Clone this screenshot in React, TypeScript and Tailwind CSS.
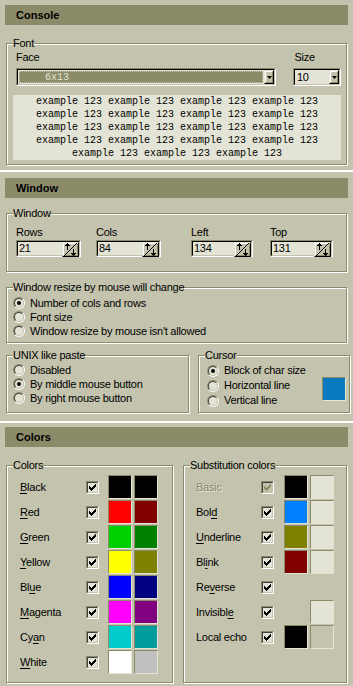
import type { ReactNode } from 'react';

// Windows-classic style preferences panel (Console / Window / Colors)

const sans = "[font-family:'Liberation_Sans',Arial,sans-serif]";
const mono = "[font-family:'Liberation_Mono','DejaVu_Sans_Mono',monospace]";

function Header({ title }: { title: string }) {
  return (
    <div className="mx-[5px] flex h-[20px] items-center bg-[#8b8b69] pl-[11px] text-[11px] font-bold tracking-normal text-black">
      {title}
    </div>
  );
}

function Group({ label, className, children }: { label: string; className?: string; children?: ReactNode }) {
  return (
    <div
      className={`border border-[#8b8b69] shadow-[1px_1px_0_#ffffff,inset_1px_1px_0_#ffffff] ${className ?? ''}`}
    >
      <div className="-mt-[7px] ml-[6px] w-fit bg-[#c4c4ae] leading-[13px]">{label}</div>
      {children}
    </div>
  );
}

function Sunken({ className, children }: { className?: string; children?: ReactNode }) {
  return (
    <div className={`border border-t-[#8b8b69] border-l-[#8b8b69] border-r-white border-b-white ${className ?? ''}`}>
      <div className="flex h-full w-full border border-t-black border-l-black border-r-[#c4c4ae] border-b-[#c4c4ae] bg-[#e4e4d6]">
        {children}
      </div>
    </div>
  );
}

function Raised({ className, children }: { className?: string; children?: ReactNode }) {
  return (
    <div className={`border border-t-[#e4e4d6] border-l-[#e4e4d6] border-r-black border-b-black ${className ?? ''}`}>
      <div className="flex h-full w-full items-center justify-center border border-t-white border-l-white border-r-[#8b8b69] border-b-[#8b8b69] bg-[#c4c4ae]">
        {children}
      </div>
    </div>
  );
}

function DropArrow() {
  return (
    <svg width="5" height="3" viewBox="0 0 5 3">
      <path d="M0 0h5L2.5 3z" fill="#000" />
    </svg>
  );
}

function SpinIcon() {
  return (
    <svg width="13" height="13" viewBox="0 0 13 13" shapeRendering="crispEdges">
      <path d="M0 13L13 0" stroke="#000" strokeWidth="1" />
      <path d="M3 0h1v1h1v1h1v1H4v4H3V3H1V2h1V1h1z" fill="#000" />
      <path d="M9 6h1v4h2v1h-1v1h-1v1H9v-1H8v-1H7v-1h2z" fill="#000" />
    </svg>
  );
}

function NumField({ value, width }: { value: string; width: string }) {
  return (
    <Sunken className={`h-[17px] ${width}`}>
      <div className="flex-1 pl-[1px] text-[11px] leading-[13px]">{value}</div>
      <Raised className="h-[15px] w-[17px]">
        <SpinIcon />
      </Raised>
    </Sunken>
  );
}

function Radio({ checked }: { checked?: boolean }) {
  return (
    <span className="flex h-[12px] w-[12px] shrink-0 rounded-full border border-t-[#8b8b69] border-l-[#8b8b69] border-r-white border-b-white">
      <span className="flex h-full w-full items-center justify-center rounded-full border border-t-[#404040] border-l-[#404040] border-r-[#c4c4ae] border-b-[#c4c4ae] bg-[#e4e4d6]">
        {checked && <span className="h-[4px] w-[4px] rounded-full bg-black" />}
      </span>
    </span>
  );
}

function RadioRow({ label, checked, height = 'h-[14px]', gap = 'pl-[6px]' }: { label: string; checked?: boolean; height?: string; gap?: string }) {
  return (
    <div className={`flex items-center gap-[5px] ${height} ${gap}`}>
      <Radio checked={checked} />
      <span className="leading-[13px]">{label}</span>
    </div>
  );
}

const CHECK_OFFSETS = [2, 3, 4, 3, 2, 1, 0];

function Checkbox({ disabled }: { disabled?: boolean }) {
  const ink = disabled ? '#8b8b69' : '#000';
  return (
    <span className="flex h-[13px] w-[13px] shrink-0 border border-t-[#8b8b69] border-l-[#8b8b69] border-r-white border-b-white">
      <span
        className={`flex h-full w-full border border-t-[#404040] border-l-[#404040] border-r-[#c4c4ae] border-b-[#c4c4ae] ${
          disabled ? 'bg-[#c4c4ae]' : 'bg-[#e4e4d6]'
        }`}
      >
        <svg width="9" height="9" viewBox="0 0 9 9" shapeRendering="crispEdges">
          {CHECK_OFFSETS.map((dy, i) => (
            <rect key={i} x={1 + i} y={1 + dy} width="1" height="3" fill={ink} />
          ))}
        </svg>
      </span>
    </span>
  );
}

function Swatch({ color }: { color?: string }) {
  if (!color) return <span className="h-[24px] w-[24px] shrink-0" />;
  return (
    <span className="h-[24px] w-[24px] shrink-0 border border-t-[#8b8b69] border-l-[#8b8b69] border-r-[#e4e4d6] border-b-[#e4e4d6]">
      <span className="block h-full w-full" style={{ backgroundColor: color }} />
    </span>
  );
}

function Mnemonic({ text, at }: { text: string; at?: number }) {
  if (at === undefined) return <>{text}</>;
  return (
    <>
      {text.slice(0, at)}
      <span className="underline underline-offset-[2px]">{text[at]}</span>
      {text.slice(at + 1)}
    </>
  );
}

const BASIC_COLORS = [
  { name: 'Black', at: 0, a: '#000000', b: '#000000' },
  { name: 'Red', at: 0, a: '#ff0000', b: '#800000' },
  { name: 'Green', at: 0, a: '#00d000', b: '#008000' },
  { name: 'Yellow', at: 0, a: '#ffff00', b: '#808000' },
  { name: 'Blue', at: 2, a: '#0000ff', b: '#000080' },
  { name: 'Magenta', at: 0, a: '#ff00ff', b: '#800080' },
  { name: 'Cyan', at: 2, a: '#00cccc', b: '#009c9c' },
  { name: 'White', at: 0, a: '#ffffff', b: '#c0c0c0' },
];

const SUBST_COLORS: { name: string; at?: number; a?: string; b?: string; disabled?: boolean }[] = [
  { name: 'Basic', a: '#000000', b: '#e4e4d6', disabled: true },
  { name: 'Bold', at: 3, a: '#0080ff', b: '#e4e4d6' },
  { name: 'Underline', at: 0, a: '#808000', b: '#e4e4d6' },
  { name: 'Blink', at: 2, a: '#800000', b: '#e4e4d6' },
  { name: 'Reverse', at: 2 },
  { name: 'Invisible', at: 8, b: '#e4e4d6' },
  { name: 'Local echo', a: '#000000', b: '#c4c4ae' },
];

const PREVIEW = [
  'example 123 example 123 example 123 example 123',
  'example 123 example 123 example 123 example 123',
  'example 123 example 123 example 123 example 123',
  'example 123 example 123 example 123 example 123',
  'example 123 example 123 example 123',
];

export default function App() {
  return (
    <div className={`h-[686px] w-[353px] overflow-hidden bg-[#c4c4ae] text-[11px] tracking-[-0.25px] text-black ${sans}`}>
      {/* Console */}
      <div className="h-[170px] pt-[5px]">
        <Header title="Console" />
        <Group label="Font" className="ml-[6px] mt-[18px] h-[122px] w-[341px]">
          <div className="mt-[1px] flex leading-[13px]">
            <span className="ml-[9px]">Face</span>
            <span className="ml-[255px]">Size</span>
          </div>
          <div className="mt-[4px] flex">
            <Sunken className="ml-[9px] h-[18px] w-[260px]">
              <div className="flex-1 p-[1px]">
                <div className={`flex h-full items-center border border-dotted border-[#c4c4ae] bg-[#8b8b69] pl-[25px] text-[10px] tracking-normal text-[#e4e4d6] ${mono}`}>
                  6x13
                </div>
              </div>
              <Raised className="h-[14px] w-[10px]">
                <DropArrow />
              </Raised>
            </Sunken>
            <Sunken className="ml-[17px] h-[18px] w-[48px]">
              <div className="flex-1 pl-[2px] text-[11px] leading-[14px]">10</div>
              <Raised className="h-[14px] w-[10px]">
                <DropArrow />
              </Raised>
            </Sunken>
          </div>
          <div className={`ml-[6px] mt-[9px] h-[65px] w-[328px] bg-[#e4e4d6] text-center text-[10px] leading-[13px] tracking-normal ${mono}`}>
            {PREVIEW.map((line, i) => (
              <div key={i} className="whitespace-pre">
                {line}
              </div>
            ))}
          </div>
        </Group>
      </div>

      {/* Window */}
      <div className="h-[251px] border-t-2 border-white pt-[6px]">
        <Header title="Window" />
        <Group label="Window" className="ml-[6px] mt-[15px] h-[59px] w-[341px]">
          <div className="mt-[6px] flex leading-[13px]">
            <div className="ml-[9px] flex w-[80px] flex-col gap-[1px]">
              <span>Rows</span>
              <NumField value="21" width="w-[65px]" />
            </div>
            <div className="flex w-[95px] flex-col gap-[1px]">
              <span>Cols</span>
              <NumField value="84" width="w-[65px]" />
            </div>
            <div className="flex w-[79px] flex-col gap-[1px]">
              <span>Left</span>
              <NumField value="134" width="w-[62px]" />
            </div>
            <div className="flex w-[65px] flex-col gap-[1px]">
              <span>Top</span>
              <NumField value="131" width="w-[63px]" />
            </div>
          </div>
        </Group>
        <Group label="Window resize by mouse will change" className="ml-[6px] mt-[15px] h-[56px] w-[341px]">
          <div className="mt-[2px]">
            <RadioRow label="Number of cols and rows" checked />
            <RadioRow label="Font size" />
            <RadioRow label="Window resize by mouse isn't allowed" />
          </div>
        </Group>
        <div className="mt-[12px] flex">
          <Group label="UNIX like paste" className="ml-[6px] h-[58px] w-[183px]">
            <div className="mt-[1px]">
              <RadioRow label="Disabled" />
              <RadioRow label="By middle mouse button" checked />
              <RadioRow label="By right mouse button" />
            </div>
          </Group>
          <Group label="Cursor" className="ml-[9px] h-[58px] w-[152px]">
            <div className="flex">
              <div className="mt-[1px] flex-1">
                <RadioRow label="Block of char size" checked height="h-[15px]" gap="pl-[8px]" />
                <RadioRow label="Horizontal line" height="h-[15px]" gap="pl-[8px]" />
                <RadioRow label="Vertical line" height="h-[15px]" gap="pl-[8px]" />
              </div>
              <div className="mr-[3px] mt-[15px] h-[24px] w-[24px] border border-t-[#8b8b69] border-l-[#8b8b69] border-r-[#e4e4d6] border-b-[#e4e4d6] bg-[#0a7bbf]" />
            </div>
          </Group>
        </div>
      </div>

      {/* Colors */}
      <div className="h-[265px] border-t-2 border-white pt-[4px]">
        <Header title="Colors" />
        <div className="mt-[18px] flex">
          <Group label="Colors" className="ml-[6px] h-[218px] w-[167px]">
            <div className="mt-[3px] flex flex-col gap-[1px]">
              {BASIC_COLORS.map((c) => (
                <div key={c.name} className="flex h-[24px] items-center">
                  <span className="ml-[13px] w-[66px]">
                    <Mnemonic text={c.name} at={c.at} />
                  </span>
                  <Checkbox />
                  <span className="ml-[9px] flex gap-[2px]">
                    <Swatch color={c.a} />
                    <Swatch color={c.b} />
                  </span>
                </div>
              ))}
            </div>
          </Group>
          <Group label="Substitution colors" className="ml-[10px] h-[218px] w-[164px]">
            <div className="mt-[3px] flex flex-col gap-[1px]">
              {SUBST_COLORS.map((c) => (
                <div key={c.name} className="flex h-[24px] items-center">
                  <span
                    className={`ml-[12px] w-[65px] ${
                      c.disabled ? 'text-[#8b8b69] [text-shadow:1px_1px_0_#e4e4d6]' : ''
                    }`}
                  >
                    <Mnemonic text={c.name} at={c.at} />
                  </span>
                  <Checkbox disabled={c.disabled} />
                  <span className="ml-[10px] flex gap-[2px]">
                    <Swatch color={c.a} />
                    <Swatch color={c.b} />
                  </span>
                </div>
              ))}
            </div>
          </Group>
        </div>
      </div>
    </div>
  );
}
